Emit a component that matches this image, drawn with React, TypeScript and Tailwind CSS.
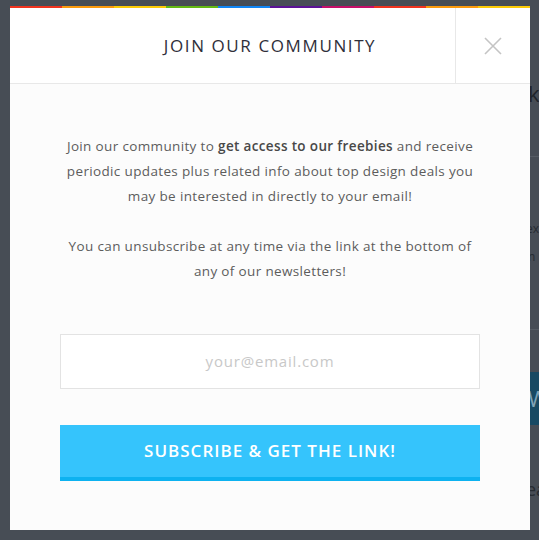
import React from 'react';

const rainbow = [
  'bg-[#f0331f]',
  'bg-[#fb9a0c]',
  'bg-[#fccb05]',
  'bg-[#63ba13]',
  'bg-[#1186f5]',
  'bg-[#5b1296]',
  'bg-[#c60f6a]',
  'bg-[#f0331f]',
  'bg-[#fb9a0c]',
  'bg-[#fccb05]',
];

// faint bits of the page behind the overlay, showing on the right edge
const Backdrop: React.FC = () => (
  <div className="absolute left-[528px] top-[78px] w-[20px] flex flex-col text-[#262b31]">
    <div className="h-[30px] text-[22px] leading-[30px] text-[#1f242a]">k</div>
    <div className="mt-[48px] h-px bg-[#565c64]" />
    <div className="mt-[64px] text-[12px] leading-[16px] -ml-[2px]">ex</div>
    <div className="mt-[12px] text-[12px] leading-[16px]">n</div>
    <div className="mt-[64px] h-px bg-[#565c64]" />
    <div className="mt-[42px] h-[53px] bg-[#184a63] text-[#7fa3b6] text-[22px] leading-[53px]">W</div>
    <div className="mt-[52px] text-[18px] leading-[24px] -ml-[2px]">ea</div>
  </div>
);

const App: React.FC = () => {
  return (
    <div className="relative w-[539px] h-[540px] overflow-hidden bg-[#474d55] pt-[6px] pl-[10px] font-['Open_Sans',sans-serif]">
      <Backdrop />

      <div className="relative w-[520px] h-[524px] flex flex-col bg-[#fcfcfc]">
        <div className="flex h-[2px]">
          {rainbow.map((c, i) => (
            <div key={i} className={`flex-1 ${c}`} />
          ))}
        </div>

        <div className="relative h-[76px] flex items-center justify-center bg-white border-b border-[#e8e8e8]">
          <h2 className="text-[17px] tracking-[1.6px] text-[#2f2f3a]">JOIN OUR COMMUNITY</h2>
          <button className="absolute right-0 top-0 h-full w-[75px] flex items-center justify-center border-l border-[#e8e8e8]">
            <svg width="18" height="18" viewBox="0 0 18 18" fill="none" stroke="#c4c4c4" strokeWidth="1.6">
              <path d="M1 1L17 17M17 1L1 17" />
            </svg>
          </button>
        </div>

        <div className="flex flex-col items-center px-[50px] pt-[50px]">
          <p className="text-center text-[13.5px] leading-[25px] text-[#5c5c5c] tracking-[0.35px]">
            Join our community to <span className="font-semibold text-[#484848]">get access to our freebies</span> and receive
            periodic updates plus related info about top design deals you may be interested in directly to your email!
          </p>
          <p className="mt-[25px] text-center text-[13.5px] leading-[25px] text-[#5c5c5c] tracking-[0.35px] px-[6px]">
            You can unsubscribe at any time via the link at the bottom of any of our newsletters!
          </p>

          <div className="mt-[50px] w-[420px] h-[55px] bg-white border border-[#e3e3e3] flex items-center justify-center">
            <span className="text-[15px] text-[#c8c8c8] tracking-[0.8px]">your@email.com</span>
          </div>

          <button className="mt-[36px] w-[420px] h-[56px] bg-[#35c4fc] border-b-4 border-[#0db2f0] text-white font-semibold text-[17px] tracking-[1px]">
            SUBSCRIBE &amp; GET THE LINK!
          </button>
        </div>
      </div>
    </div>
  );
};

export default App;
